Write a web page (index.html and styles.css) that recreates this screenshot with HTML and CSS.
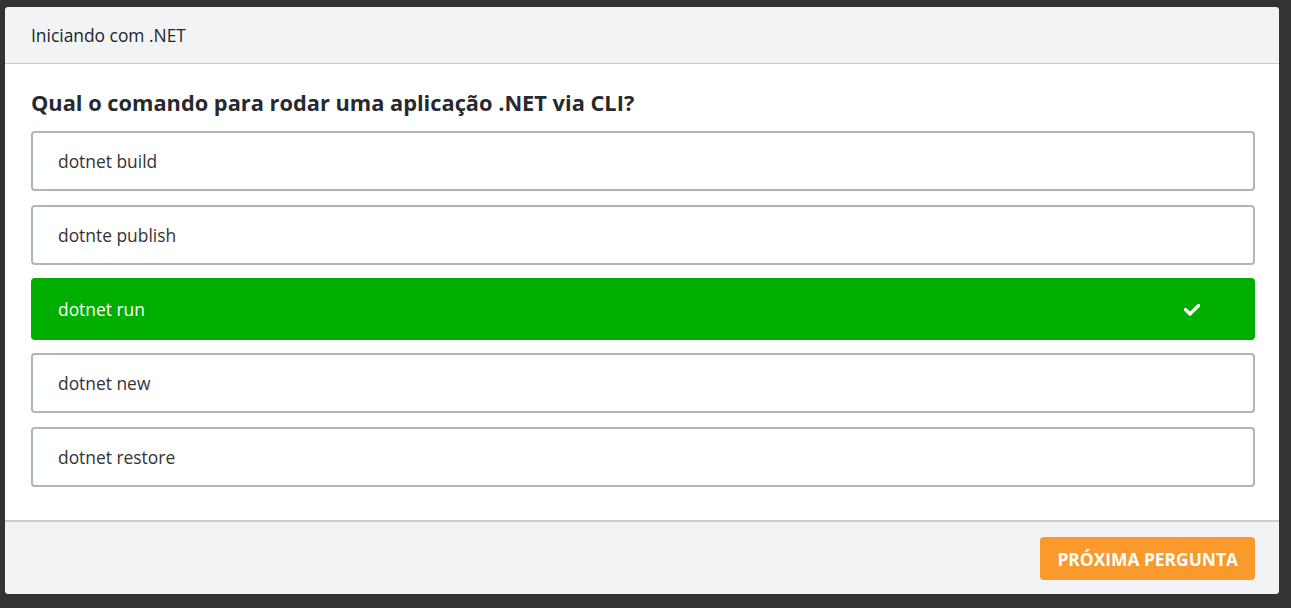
FILE: index.html
```html
<!DOCTYPE html>
<html lang="pt-BR">
<head>
<meta charset="utf-8">
<title>Quiz</title>
<link rel="stylesheet" href="styles.css">
</head>
<body>
<div class="card">
  <div class="card-header">Iniciando com .NET</div>
  <div class="card-body">
    <h2 class="question">Qual o comando para rodar uma aplicação .NET via CLI?</h2>
    <ul class="options">
      <li class="option">dotnet build</li>
      <li class="option">dotnte publish</li>
      <li class="option correct"><span>dotnet run</span>
        <svg class="check" width="16" height="13" viewBox="0 0 16 13"><path d="M1.5 6.5 L6 11 L14.5 2.5" fill="none" stroke="#fff" stroke-width="3.2" stroke-linecap="round" stroke-linejoin="round"/></svg>
      </li>
      <li class="option">dotnet new</li>
      <li class="option">dotnet restore</li>
    </ul>
  </div>
  <div class="card-footer">
    <button class="btn-next">PRÓXIMA PERGUNTA</button>
  </div>
</div>
</body>
</html>
```
FILE: styles.css
```css
html, body {
  margin: 0;
  background: #333333;
}
body {
  padding: 7px 12px 14px 5px;
  font-family: "Open Sans", "Noto Sans", sans-serif;
  color: #212529;
}
.card {
  background: #fff;
  border-radius: 4px;
  overflow: hidden;
}
.card-header {
  background: #f2f3f5;
  border-bottom: 1px solid #c8cacd;
  height: 56px;
  display: flex;
  align-items: center;
  padding: 0 26px;
  font-size: 17.4px;
  color: #212529;
}
.card-body {
  padding: 24px 24px 33px 26px;
}
.question {
  margin: 0 0 13px;
  font-size: 21.8px;
  line-height: 30px;
  font-weight: 700;
  color: #262a2e;
}
.options {
  list-style: none;
  margin: 0;
  padding: 0;
  display: flex;
  flex-direction: column;
  gap: 14px;
}
.option {
  height: 60px;
  box-sizing: border-box;
  border: 2px solid #adb5bd;
  border-radius: 4px;
  display: flex;
  align-items: center;
  justify-content: space-between;
  padding: 0 53px 0 25px;
  font-size: 17.4px;
  color: #333;
}
.option.correct {
  background: #00ae00;
  border-color: #00ae00;
  color: #fff;
  height: 62px;
  margin: -1px 0;
}
.check {
  display: block;
}
.card-footer {
  background: #f2f3f5;
  border-top: 2px solid #c9cbce;
  padding: 15px 24px 14px 26px;
  display: flex;
  justify-content: flex-end;
}
.btn-next {
  height: 43px;
  padding: 0 17px;
  border: none;
  border-radius: 4px;
  background: #fa992c;
  color: #fff;
  font-family: "Open Sans", "Noto Sans", sans-serif;
  font-weight: 700;
  font-size: 17.4px;
  letter-spacing: 0;
}
```
